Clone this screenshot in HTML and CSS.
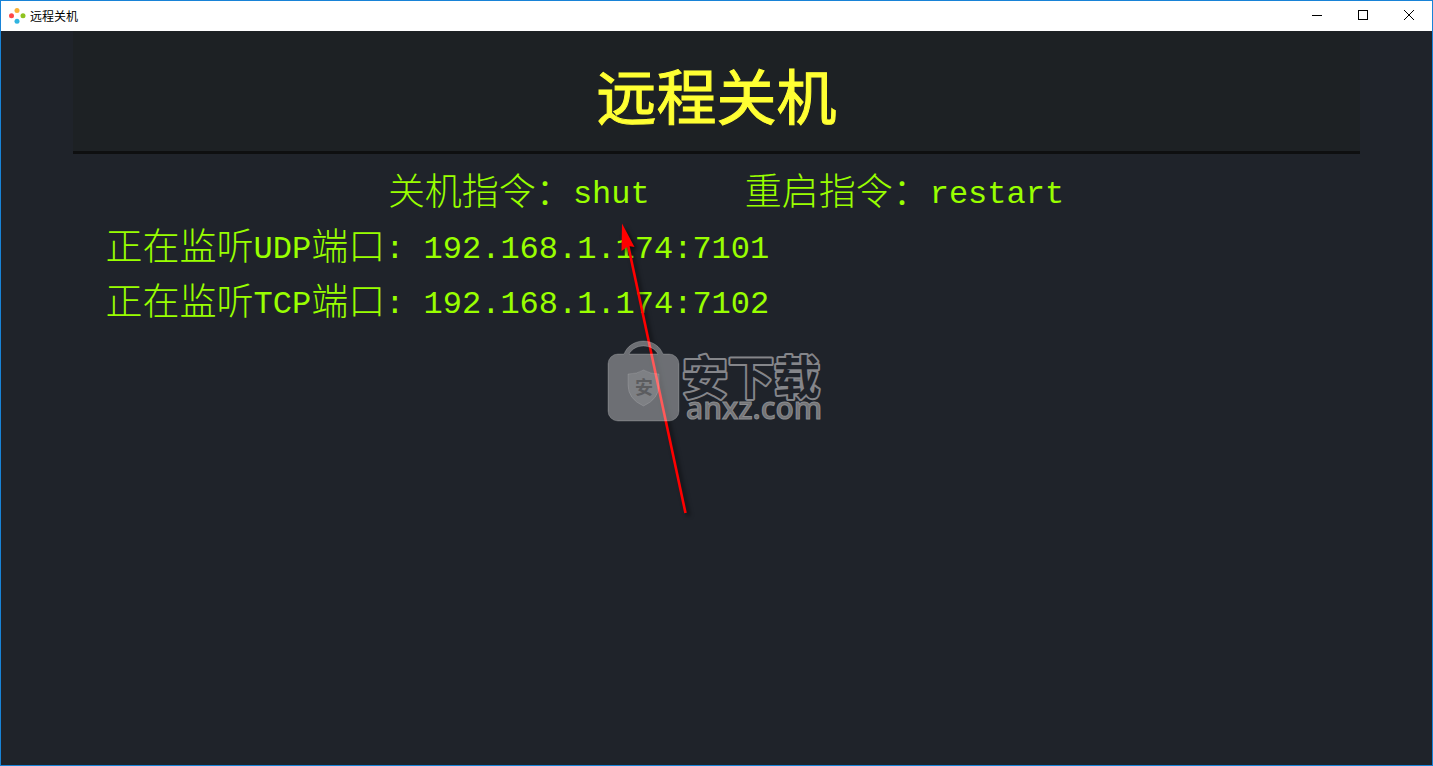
FILE: index.html
```html
<!DOCTYPE html>
<html lang="zh-CN">

<head>
    <meta charset="UTF-8">
    <meta name="viewport" content="width=device-width, initial-scale=1.0">
    <title>远程关机</title>
    <link rel="stylesheet" href="styles.css">
</head>

<body>
    <div class="window">
        <div class="titlebar">
            <svg class="app-icon" width="18" height="18" viewBox="0 0 18 18">
                <circle cx="9" cy="3.500" r="2.500" fill="#f9b233" />
                <circle cx="3.500" cy="8.800" r="2.500" fill="#ff4747" />
                <circle cx="15" cy="8.800" r="2.500" fill="#8fc31f" />
                <circle cx="9" cy="14.300" r="2.500" fill="#2fb4e0" />
            </svg>
            <span class="app-name">远程关机</span>
            <div class="controls">
                <button type="button" aria-label="最小化">
                    <svg width="12" height="12" viewBox="0 0 12 12" shape-rendering="crispEdges"><path d="M1 5.5h10" /></svg>
                </button>
                <button type="button" aria-label="最大化">
                    <svg width="12" height="12" viewBox="0 0 12 12" shape-rendering="crispEdges"><path d="M1.5 0.5h9v9h-9z" /></svg>
                </button>
                <button type="button" aria-label="关闭">
                    <svg width="12" height="12" viewBox="0 0 12 12"><path d="M1 0l10 10M11 0L1 10" /></svg>
                </button>
            </div>
        </div>

        <main class="stage">
            <header class="banner">
                <h1>远程关机</h1>
            </header>
            <section class="info">
                <div class="commands">
                    <p>关机指令：<span class="mono">shut</span></p>
                    <p>重启指令：<span class="mono">restart</span></p>
                </div>
                <p>正在监听<span class="mono">UDP</span>端口<span class="mono">: 192.168.1.174:7101</span></p>
                <p>正在监听<span class="mono">TCP</span>端口<span class="mono">: 192.168.1.174:7102</span></p>
            </section>

            <svg class="overlay" width="230" height="300" viewBox="600 220 230 300">
                <!-- arrow -->
                <g class="arrow">
                    <path d="M627 240L685.500 513" fill="none" stroke="#f00" stroke-width="2.6" />
                    <path d="M622 223.500L634.500 247L628.500 246L621.500 251z" fill="#f00" />
                </g>
                <!-- bag -->
                <path class="bag" d="M618 354h6C627 346 635 341 643.500 341S660 346 663 354h6a10 10 0 0 1 10 10v47a10 10 0 0 1-10 10h-51a10 10 0 0 1-10-10v-47a10 10 0 0 1 10-10zM629 354h29C655 349 650 346 643.500 346S632 349 629 354z" />
                <path class="shield" d="M628 374q9 0 15.500-4q7 4 15.500 4v11q0 14-15.500 21q-15.500-7-15.500-21z" />
                <text class="seal" x="635" y="394">安</text>
                <!-- name -->
                <text class="name" x="682" y="394">安下载</text>
                <text class="site" x="686" y="419">anxz.com</text>
            </svg>
        </main>
    </div>
</body>

</html>
```
FILE: styles.css
```css
* {
    box-sizing: border-box;
}

body {
    margin: 0;
    font-family: "Noto Sans CJK SC", sans-serif;
}

.window {
    display: flex;
    flex-direction: column;
    min-height: 100vh;
    border: 1px solid #1883d7;
    background: #1f232a;
}

.titlebar {
    display: flex;
    align-items: center;
    height: 30px;
    padding-left: 7px;
    background: #fff;
}

.app-name {
    margin-left: 4px;
    padding-bottom: 2px;
    font-size: 12px;
    color: #000;
}

.controls {
    display: flex;
    align-self: stretch;
    margin-left: auto;
}

.controls button {
    display: flex;
    align-items: center;
    justify-content: center;
    width: 46px;
    padding: 0;
    border: none;
    background: none;
}

.controls path {
    fill: none;
    stroke: #000;
}

.stage {
    position: relative;
    flex: 1;
}

.banner {
    width: 90%;
    height: 123px;
    margin: 0 auto;
    border-bottom: 3px solid #0e0f10;
    background: #1d2124;
    text-align: center;
}

h1 {
    margin: 0;
    font-size: 60px;
    font-weight: 400;
    line-height: 126px;
    color: #ffff33;
    -webkit-text-stroke: 1px #ffff33;
}

.info {
    width: 90%;
    margin: 0 auto;
    padding: 8px 0 0 33px;
    font-size: 37px;
    font-weight: 300;
    line-height: 55px;
    color: #99ff00;
}

.info p {
    margin: 0;
    height: 55px;
    white-space: nowrap;
}

.commands {
    display: flex;
    justify-content: center;
    gap: 95px;
    padding-right: 14px;
}

.mono {
    font-family: "Liberation Mono", monospace;
    font-size: 32px;
    line-height: 32px;
    vertical-align: 2px;
}

/* arrow and watermark lie over the text */
.overlay {
    position: absolute;
    top: 189px;
    left: calc(50% - 117px);
}

.arrow {
    filter: drop-shadow(3px 3px 2px rgba(0, 0, 0, 0.6));
}

.bag {
    fill: rgba(255, 255, 255, 0.35);
    fill-rule: evenodd;
    stroke: rgba(255, 255, 255, 0.2);
}

.shield {
    fill: rgba(255, 255, 255, 0.12);
    stroke: rgba(255, 255, 255, 0.12);
}

.seal {
    font-size: 18px;
    font-weight: 700;
    fill: #5b5c5f;
}

.name {
    font-size: 46px;
    font-weight: 700;
    fill: #1f232a;
    stroke: #85868a;
    stroke-width: 4px;
    stroke-linejoin: round;
    paint-order: stroke;
}

.site {
    font-family: "Noto Sans", sans-serif;
    font-size: 30px;
    font-weight: 500;
    fill: #737477;
    stroke: #8b8c8f;
    stroke-width: 1px;
}
```
